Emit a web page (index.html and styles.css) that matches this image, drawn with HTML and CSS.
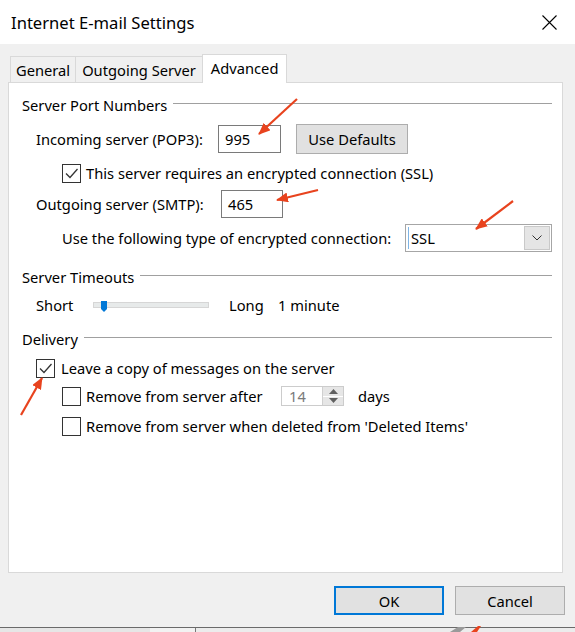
FILE: index.html
```html
<!DOCTYPE html>
<html>
<head>
<meta charset="utf-8">
<title>Internet E-mail Settings</title>
<link rel="stylesheet" href="styles.css">
</head>
<body>
<div class="window">
  <div class="titlebar">
    <span class="title">Internet E-mail Settings</span>
    <svg class="close" viewBox="0 0 15 15" width="15" height="15"><path d="M0.5 0.5 L14.5 14.5 M14.5 0.5 L0.5 14.5" stroke="#000" stroke-width="1.1" fill="none"/></svg>
  </div>
  <div class="body">
    <div class="tabs">
      <div class="tab">General</div>
      <div class="tab">Outgoing Server</div>
      <div class="tab active">Advanced</div>
    </div>
    <div class="panel">
      <div class="group g1"><span>Server Port Numbers</span><span class="rule"></span></div>

      <div class="row r-in">
        <span class="lbl lbl-in">Incoming server (POP3):</span>
        <div class="field f-in">995</div>
        <div class="btn btn-def">Use Defaults</div>
      </div>

      <div class="row r-ssl">
        <span class="cb checked"><svg viewBox="0 0 17 17" width="17" height="17"><path d="M3 8.5 L7 12.5 L14.5 4" stroke="#333" stroke-width="1.3" fill="none"/></svg></span>
        <span class="cb-lbl">This server requires an encrypted connection (SSL)</span>
      </div>

      <div class="row r-out">
        <span class="lbl lbl-out">Outgoing server (SMTP):</span>
        <div class="field f-out">465</div>
      </div>

      <div class="row r-enc">
        <span>Use the following type of encrypted connection:</span>
        <div class="select">
          <span class="sel-caret"></span>
          <span class="sel-val">SSL</span>
          <span class="sel-btn"><svg viewBox="0 0 10 6" width="10" height="6"><path d="M0.5 0.5 L5 5 L9.5 0.5" stroke="#333" stroke-width="1" fill="none"/></svg></span>
        </div>
      </div>

      <div class="group g2"><span>Server Timeouts</span><span class="rule"></span></div>

      <div class="row r-time">
        <span class="lbl-short">Short</span>
        <div class="track"><span class="thumb"></span></div>
        <span class="lbl-long">Long</span>
        <span>1 minute</span>
      </div>

      <div class="group g3"><span>Delivery</span><span class="rule"></span></div>

      <div class="row r-leave">
        <span class="cb checked"><svg viewBox="0 0 17 17" width="17" height="17"><path d="M3 8.5 L7 12.5 L14.5 4" stroke="#333" stroke-width="1.3" fill="none"/></svg></span>
        <span class="cb-lbl lbl-leave">Leave a copy of messages on the server</span>
      </div>

      <div class="row r-after">
        <span class="cb"></span>
        <span class="cb-lbl lbl-after">Remove from server after</span>
        <div class="spin">
          <span class="spin-val">14</span>
          <span class="spin-btns">
            <span class="spin-up"><svg viewBox="0 0 9 5" width="9" height="5"><path d="M0 5 L4.5 0 L9 5 Z" fill="#606060"/></svg></span>
            <span class="spin-down"><svg viewBox="0 0 9 5" width="9" height="5"><path d="M0 0 L4.5 5 L9 0 Z" fill="#606060"/></svg></span>
          </span>
        </div>
        <span class="days">days</span>
      </div>

      <div class="row r-del">
        <span class="cb"></span>
        <span class="cb-lbl">Remove from server when deleted from 'Deleted Items'</span>
      </div>
    </div>
    <div class="buttons">
      <div class="btn btn-ok">OK</div>
      <div class="btn btn-cancel">Cancel</div>
    </div>
  </div>
  <div class="taskbar">
    <span class="tb-a"></span>
    <span class="tb-b"></span>
    <span class="tb-c"></span>
  </div>

  <svg class="arrows" viewBox="0 0 575 632" width="575" height="632">
    <defs>
      <marker id="ah" viewBox="0 0 12 10" refX="11" refY="5" markerWidth="12" markerHeight="10" markerUnits="userSpaceOnUse" orient="auto">
        <path d="M0 0 L12 5 L0 10 Z" fill="#e8431e"/>
      </marker>
    </defs>
    <g stroke="#e8431e" stroke-width="2.2" fill="none" marker-end="url(#ah)">
      <line x1="297" y1="99" x2="259" y2="134"/>
      <line x1="318" y1="190" x2="277" y2="200"/>
      <line x1="513" y1="201" x2="476" y2="229"/>
      <line x1="21" y1="415" x2="42" y2="378"/>
    </g>
    <path d="M471 632 L478 626 L481 626 L477 632 Z" fill="#e8431e"/>
    <path d="M450 632 L458 627 L466 627 L460 632 Z" fill="#9a9a9a"/>
  </svg>
</div>
</body>
</html>
```

FILE: styles.css
```css
* { box-sizing: border-box; }
html, body { margin: 0; padding: 0; }
body {
  width: 575px;
  height: 632px;
  overflow: hidden;
  background: #f0f0f0;
  font-family: "Noto Sans", "Open Sans", sans-serif;
  font-size: 14.7px;
  color: #000;
}
.window {
  position: relative;
  width: 575px;
  height: 632px;
  display: flex;
  flex-direction: column;
}
.titlebar {
  height: 44px;
  flex: none;
  background: #fff;
  display: flex;
  align-items: center;
  padding-left: 11px;
}
.title { font-size: 16.6px; color: #000; }
.close { margin-left: auto; margin-right: 18px; }

.body {
  flex: 1;
  background: #f0f0f0;
  padding: 10px 10px 0 8px;
  display: flex;
  flex-direction: column;
}
.tabs {
  display: flex;
  align-items: flex-end;
  height: 28px;
  margin-left: 2px;
}
.tab {
  height: 26px;
  padding: 0 5px;
  border: 1px solid #d9d9d9;
  border-bottom: none;
  background: #f0f0f0;
  display: flex;
  align-items: center;
  margin-right: -1px;
}
.tab:nth-child(2) { padding: 0 6px; }
.tab.active {
  height: 29px;
  padding: 0 8px 3px 8px;
  background: #fff;
  margin-bottom: -1px;
  position: relative;
  z-index: 1;
}
.panel {
  height: 491px;
  width: 555px;
  background: #fff;
  border: 1px solid #d9d9d9;
  padding: 12px 10px 0 13px;
}
.group {
  display: flex;
  align-items: center;
  height: 20px;
}
.group .rule {
  flex: 1;
  height: 1px;
  background: #a0a0a0;
  margin-left: 6px;
  margin-top: -3px;
}
.row { display: flex; align-items: center; white-space: nowrap; }

.r-in { margin-top: 9px; height: 30px; padding-left: 14px; }
.lbl-in { width: 182px; flex: none; }
.field {
  height: 28px;
  border: 1px solid #7a7a7a;
  background: #fff;
  display: flex;
  align-items: center;
  padding-left: 6px;
}
.f-in { width: 63px; }
.btn {
  display: flex;
  align-items: center;
  justify-content: center;
  background: #e1e1e1;
  border: 1px solid #adadad;
}
.btn-def { margin-left: 15px; width: 112px; height: 30px; }

.r-ssl { margin-top: 9px; height: 20px; padding-left: 40px; }
.cb {
  width: 19px;
  height: 19px;
  border: 1px solid #333;
  background: #fff;
  display: flex;
  align-items: center;
  justify-content: center;
  flex: none;
}
.cb-lbl { margin-left: 5px; }

.r-out { margin-top: 7px; height: 28px; padding-left: 14px; }
.lbl-out { width: 185px; flex: none; }
.f-out { width: 62px; }

.r-enc { margin-top: 6px; height: 28px; padding-left: 40px; }
.select {
  margin-left: auto;
  width: 147px;
  height: 28px;
  border: 1px solid #a6a6a6;
  background: #fff;
  display: flex;
  align-items: center;
  padding: 1px;
}
.sel-caret { width: 1px; height: 22px; background: #7fb5e6; margin-left: 1px; }
.sel-val { margin-left: 2px; flex: 1; }
.sel-btn {
  width: 26px;
  height: 24px;
  background: #e5e5e5;
  border: 1px solid #c9c9c9;
  display: flex;
  align-items: center;
  justify-content: center;
}

.g2 { margin-top: 15px; }
.r-time { margin-top: 8px; height: 20px; padding-left: 14px; }
.lbl-short { width: 57px; }
.track {
  position: relative;
  width: 116px;
  height: 6px;
  background: #e7eaea;
  border: 1px solid #d6d6d6;
}
.thumb {
  position: absolute;
  left: 7px;
  top: -2px;
  width: 6px;
  height: 8px;
  background: #0078d7;
}
.thumb::after {
  content: "";
  position: absolute;
  left: 0;
  top: 8px;
  border-left: 3px solid transparent;
  border-right: 3px solid transparent;
  border-top: 3px solid #0078d7;
}
.lbl-long { margin-left: 20px; width: 49px; }

.g3 { margin-top: 14px; }
.r-leave { margin-top: 9px; height: 20px; padding-left: 14px; }
.lbl-leave { margin-left: 6px; }
.r-after { margin-top: 8px; height: 20px; padding-left: 40px; }
.lbl-after { width: 195px; flex: none; }
.spin {
  width: 63px;
  height: 20px;
  border: 1px solid #cccccc;
  background: #fff;
  display: flex;
  align-items: center;
}
.spin-val { flex: 1; padding-left: 7px; color: #7a7a7a; }
.spin-btns {
  width: 21px;
  height: 18px;
  display: flex;
  flex-direction: column;
  border-left: 1px solid #d0d0d0;
}
.spin-up, .spin-down {
  flex: 1;
  background: #e6e6e6;
  display: flex;
  align-items: center;
  justify-content: center;
}
.spin-up { border-bottom: 1px solid #fff; }
.days { margin-left: 14px; }
.r-del { margin-top: 10px; height: 20px; padding-left: 40px; }

.buttons {
  margin-top: 13px;
  display: flex;
  justify-content: flex-end;
  gap: 11px;
}
.btn-ok { width: 110px; height: 29px; border: 2px solid #0078d7; }
.btn-cancel { width: 110px; height: 29px; }

.taskbar {
  height: 5px;
  flex: none;
  border-top: 1px solid #6a6a6a;
  background: #e9e9e9;
  display: flex;
}
.tb-a { width: 150px; background: #e6e6e6; }
.tb-b { width: 46px; background: #f2f2f2; border-right: 1px solid #777; }
.tb-c { flex: 1; background: #ececec; }

.arrows {
  position: absolute;
  left: 0;
  top: 0;
  pointer-events: none;
}
```
